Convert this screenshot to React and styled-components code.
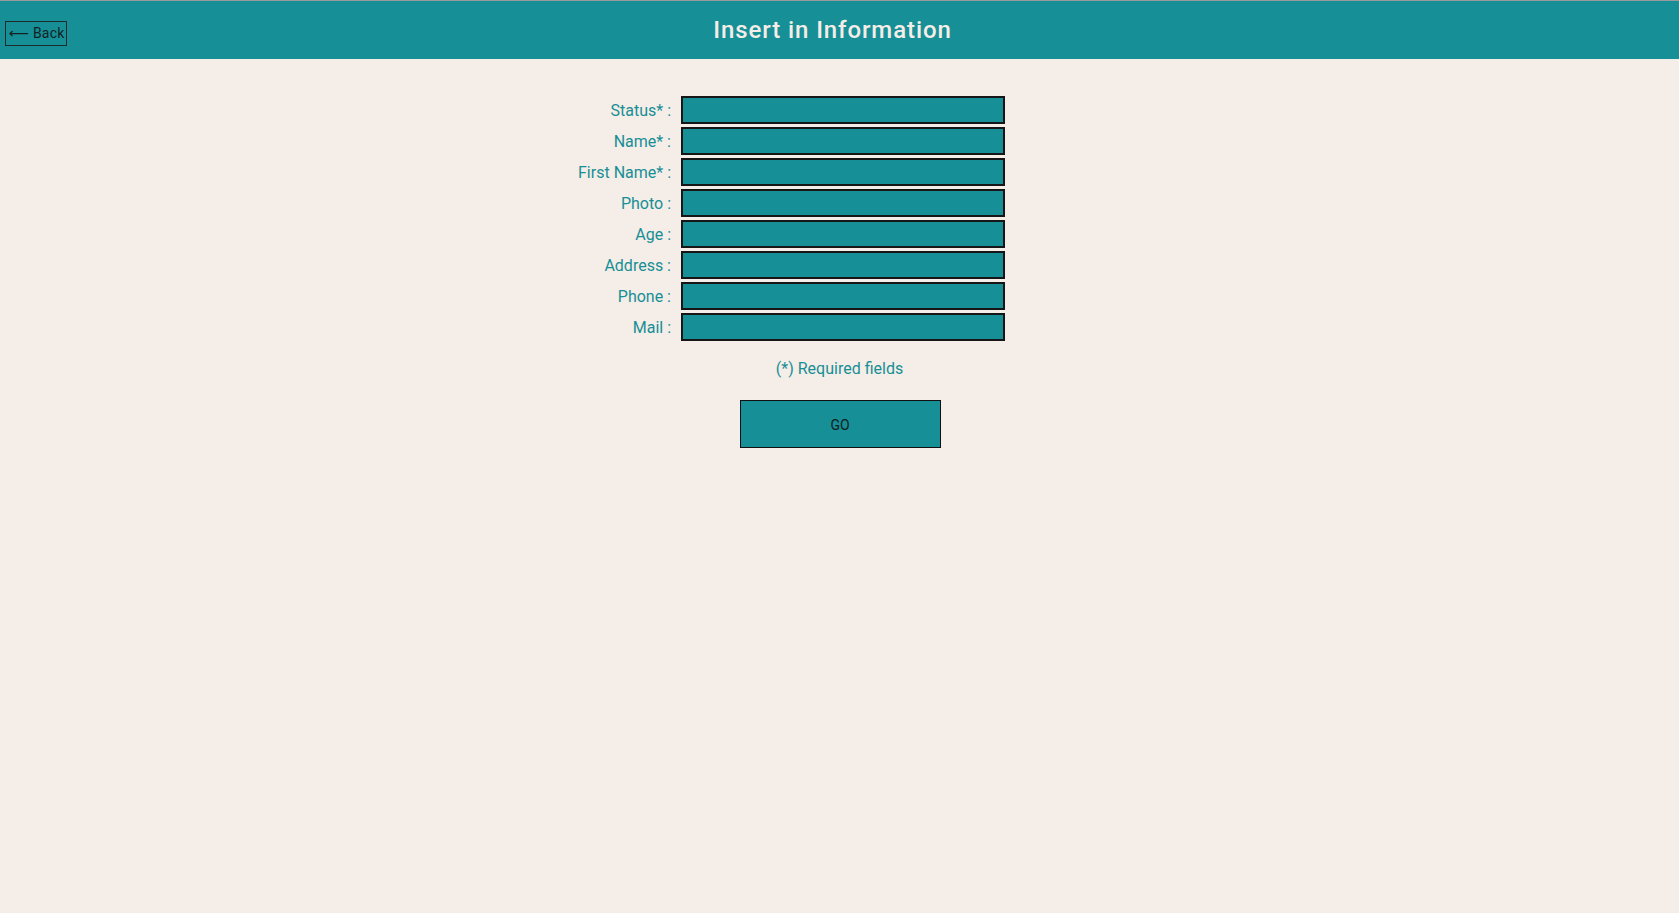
import React from 'react'
import styled, { createGlobalStyle } from 'styled-components'

const teal = '#178f96'
const cream = '#f5ede7'

const GlobalStyle = createGlobalStyle`
  html, body {
    margin: 0;
    padding: 0;
    background: ${cream};
    font-family: Roboto, "Liberation Sans", sans-serif;
  }
`

const fields = [
  'Status* :',
  'Name* :',
  'First Name* :',
  'Photo :',
  'Age :',
  'Address :',
  'Phone :',
  'Mail :',
]

function App() {
  return (
    <Page>
      <GlobalStyle />
      <Header>
        <BackButton>⟵ Back</BackButton>
        <Title>Insert in Information</Title>
        <span />
      </Header>
      <Form>
        {fields.map((f) => (
          <React.Fragment key={f}>
            <Label>{f}</Label>
            <Input type="text" />
            <span />
          </React.Fragment>
        ))}
      </Form>
      <Required>(*) Required fields</Required>
      <GoRow>
        <GoButton>GO</GoButton>
      </GoRow>
    </Page>
  )
}

const Page = styled.div`
  min-height: 913px;
  background: ${cream};
`

const Header = styled.header`
  display: grid;
  grid-template-columns: 1fr auto 1fr;
  align-items: center;
  height: 58px;
  padding-right: 14px;
  background: ${teal};
  border-top: 1px solid #9a9a9a;
`

const BackButton = styled.button`
  justify-self: start;
  margin: 6px 0 0 5px;
  height: 25px;
  width: 62px;
  padding: 0 3px;
  background: transparent;
  border: 1px solid #1e2a2a;
  color: #0f2224;
  font-family: Roboto, "DejaVu Sans", sans-serif;
  font-size: 14px;
  letter-spacing: 0.2px;
  white-space: nowrap;
  cursor: pointer;
`

const Title = styled.h1`
  margin: 0;
  color: ${cream};
  font-size: 24px;
  font-weight: 500;
  letter-spacing: 0.9px;
`

const Form = styled.div`
  display: grid;
  grid-template-columns: 1fr 324px 1fr;
  column-gap: 10px;
  row-gap: 3px;
  padding: 37px 0 0 7px;
  align-items: center;
`

const Label = styled.label`
  text-align: right;
  color: ${teal};
  font-size: 16px;
`

const Input = styled.input`
  box-sizing: border-box;
  width: 324px;
  height: 28px;
  margin: 0;
  background: ${teal};
  border: 2px solid #161616;
  border-radius: 0;
  outline: none;
`

const Required = styled.p`
  margin: 18px 0 0;
  text-align: center;
  color: ${teal};
  font-size: 16px;
`

const GoRow = styled.div`
  display: flex;
  justify-content: center;
  padding: 22px 0 0 1px;
`

const GoButton = styled.button`
  width: 201px;
  height: 48px;
  padding-top: 3px;
  background: ${teal};
  border: 1px solid #111;
  color: #102020;
  font-family: Roboto, sans-serif;
  font-size: 14px;
  cursor: pointer;
`

export default App
